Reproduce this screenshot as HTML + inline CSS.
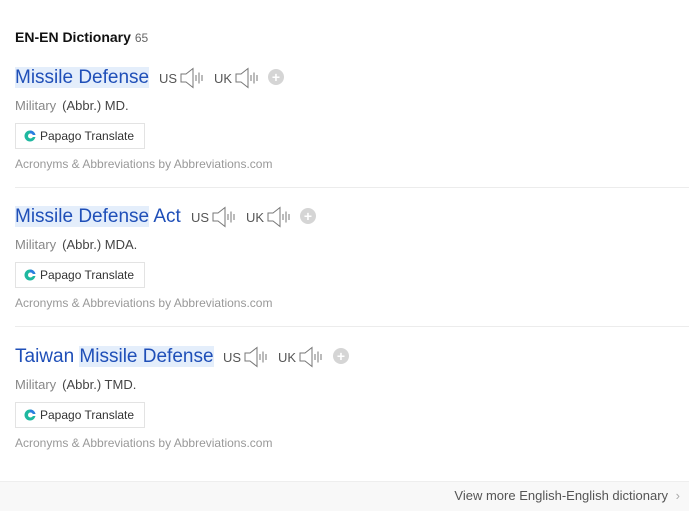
<!DOCTYPE html>
<html><head><meta charset="utf-8"><style>
*{margin:0;padding:0;box-sizing:border-box}
body{width:689px;height:511px;background:#fff;font-family:"Liberation Sans",Arial,sans-serif;position:relative;overflow:hidden}
.a{position:absolute;white-space:nowrap}
h1{position:absolute;left:15px;top:29px;font-size:14px;font-weight:bold;color:#111}
h1 span{font-size:12px;font-weight:normal;color:#666}
.t{font-size:19px;color:#1f4fb8;line-height:22px}
.hl{background:#e4eefb}
.pr{font-size:13px;color:#555}
.spk{display:inline-block;vertical-align:-6px;margin-left:3px}
.plus{position:absolute;width:16px;height:16px;border-radius:50%;background:#d5d5d5;color:#fff;font-size:14px;line-height:16px;text-align:center;font-weight:bold}
.m{font-size:13px;color:#888}
.m b{font-weight:normal;color:#444;margin-left:6px}
.btn{position:absolute;left:15px;width:130px;height:26px;border:1px solid #e3e3e3;font-size:12px;color:#333;line-height:24px;padding-left:24px}
.btn i{position:absolute;left:8px;top:6px;width:12px;height:12px}
.btn i svg{display:block}
.src{font-size:12px;color:#999}
.sep{position:absolute;left:15px;right:0;height:1px;background:#ececec}
.foot{position:absolute;left:0;right:0;top:481px;height:30px;background:#f8f8f8;border-top:1px solid #eee;font-size:13px;color:#555;text-align:right;padding-right:9px;line-height:28px}
</style></head><body>
<h1>EN-EN Dictionary <span>65</span></h1>

<svg width="0" height="0" style="position:absolute"><defs>
<symbol id="sp" viewBox="0 0 24 22"><path d="M1 7h5l7-5.5v19L6 15H1z" fill="none" stroke="#777" stroke-width="1"/><path d="M16 8v6M19 5.5v11M22 8v6" stroke="#777" stroke-width="1"/></symbol>
<symbol id="pp" viewBox="0 0 12 12"><circle cx="6" cy="6" r="5.5" fill="#1fb8a0"/><path d="M6 .5A5.5 5.5 0 0 1 11.5 6H6z" fill="#2a7de1"/><circle cx="6.5" cy="6" r="2.5" fill="#fff"/><rect x="6" y="5" width="6" height="2" fill="#fff"/></symbol>
</defs></svg>

<div class="a t" style="left:15px;top:67px"><span class="hl">Missile Defense</span></div>
<div class="a pr" style="left:159px;top:67px">US<svg class="spk" width="24" height="22"><use href="#sp"/></svg></div>
<div class="a pr" style="left:214px;top:67px">UK<svg class="spk" width="24" height="22"><use href="#sp"/></svg></div>
<div class="plus" style="left:268px;top:69px">+</div>
<div class="a m" style="left:15px;top:98px">Military<b>(Abbr.) MD.</b></div>
<div class="btn" style="top:123px"><i><svg width="12" height="12"><use href="#pp"/></svg></i>Papago Translate</div>
<div class="a src" style="left:15px;top:157px">Acronyms &amp; Abbreviations by Abbreviations.com</div>
<div class="sep" style="top:187px"></div>

<div class="a t" style="left:15px;top:206px"><span class="hl">Missile Defense</span> Act</div>
<div class="a pr" style="left:191px;top:206px">US<svg class="spk" width="24" height="22"><use href="#sp"/></svg></div>
<div class="a pr" style="left:246px;top:206px">UK<svg class="spk" width="24" height="22"><use href="#sp"/></svg></div>
<div class="plus" style="left:300px;top:208px">+</div>
<div class="a m" style="left:15px;top:237px">Military<b>(Abbr.) MDA.</b></div>
<div class="btn" style="top:262px"><i><svg width="12" height="12"><use href="#pp"/></svg></i>Papago Translate</div>
<div class="a src" style="left:15px;top:296px">Acronyms &amp; Abbreviations by Abbreviations.com</div>
<div class="sep" style="top:326px"></div>

<div class="a t" style="left:15px;top:346px">Taiwan <span class="hl">Missile Defense</span></div>
<div class="a pr" style="left:223px;top:346px">US<svg class="spk" width="24" height="22"><use href="#sp"/></svg></div>
<div class="a pr" style="left:278px;top:346px">UK<svg class="spk" width="24" height="22"><use href="#sp"/></svg></div>
<div class="plus" style="left:333px;top:348px">+</div>
<div class="a m" style="left:15px;top:377px">Military<b>(Abbr.) TMD.</b></div>
<div class="btn" style="top:402px"><i><svg width="12" height="12"><use href="#pp"/></svg></i>Papago Translate</div>
<div class="a src" style="left:15px;top:436px">Acronyms &amp; Abbreviations by Abbreviations.com</div>

<div class="foot">View more English-English dictionary <span style="color:#aaa;margin-left:4px">&#8250;</span></div>
</body></html>
